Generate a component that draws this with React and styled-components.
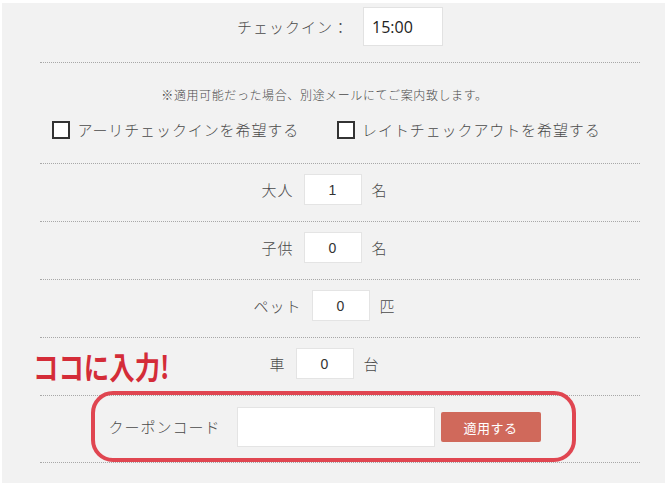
import React from "react";
import styled, { createGlobalStyle } from "styled-components";

const GlobalStyle = createGlobalStyle`
  body {
    margin: 0;
    background: #ffffff;
    font-family: "Noto Sans CJK JP", "Noto Sans", sans-serif;
  }
`;

const Panel = styled.div`
  position: relative;
  margin: 3px 1px 0 2px;
  height: 480px;
  padding: 0 25px 0 38px;
  background: #f2f2f2;
  box-sizing: border-box;
`;

const Section = styled.div`
  display: flex;
  flex-direction: column;
  align-items: center;
  padding: ${(p) => p.$pad || "0"};
  border-bottom: 1px dotted #a8a8a8;
`;

const Row = styled.div`
  display: flex;
  align-items: center;
  justify-content: center;
  gap: ${(p) => p.$gap || 10}px;
  padding: ${(p) => p.$pad || "0"};
  border-bottom: 1px dotted #a8a8a8;
`;

const Label = styled.span`
  font-size: 15px;
  font-weight: 300;
  line-height: 20px;
  letter-spacing: 1px;
  color: #4a4a4a;
`;

const TimeInput = styled.input`
  width: 80px;
  height: 39px;
  box-sizing: border-box;
  border: 1px solid #e2e2e2;
  background: #fff;
  padding: 0 8px;
  font-family: "Open Sans", "Liberation Sans", sans-serif;
  font-size: 16px;
  color: #222;
  outline: none;
`;

const Note = styled.p`
  margin: 0 0 19px;
  padding-right: 31px;
  font-size: 12px;
  font-weight: 300;
  line-height: 15px;
  letter-spacing: 0.6px;
  color: #4a4a4a;
`;

const CheckRow = styled.div`
  display: flex;
  align-items: center;
  gap: 38px;
  padding-right: 27px;
`;

const CheckItem = styled.label`
  display: flex;
  align-items: center;
  gap: 7px;
  font-size: 15px;
  font-weight: 300;
  line-height: 18px;
  letter-spacing: 0.9px;
  color: #4a4a4a;
`;

const Box = styled.span`
  width: 14px;
  height: 14px;
  border: 2px solid #333;
  background: #fff;
`;

const NumInput = styled.input`
  width: 58px;
  height: 31px;
  box-sizing: border-box;
  border: 1px solid #e4e4e4;
  background: #fff;
  text-align: center;
  font-family: "Liberation Sans", sans-serif;
  font-size: 14px;
  color: #333;
  outline: none;
`;

const CodeInput = styled.input`
  width: 198px;
  height: 40px;
  box-sizing: border-box;
  margin-left: 6px;
  border: 1px solid #e4e4e4;
  background: #fff;
  outline: none;
`;

const ApplyButton = styled.button`
  width: 100px;
  height: 30px;
  margin-left: -4px;
  border: none;
  border-radius: 2px;
  background: #d0695b;
  color: #fff;
  font-family: "Noto Sans CJK JP", sans-serif;
  font-size: 13px;
  letter-spacing: 0.5px;
`;

const Callout = styled.div`
  position: absolute;
  left: 31px;
  top: 343px;
  font-size: 31px;
  font-weight: 700;
  line-height: 40px;
  color: #d42c38;
  transform: scaleX(0.82);
  transform-origin: left center;
  white-space: nowrap;
`;

const Frame = styled.div`
  position: absolute;
  left: 89px;
  top: 388px;
  width: 485px;
  height: 71px;
  box-sizing: border-box;
  border: 4px solid #e04651;
  border-radius: 22px;
  pointer-events: none;
`;

const counts = [
  { label: "大人", value: "1", unit: "名" },
  { label: "子供", value: "0", unit: "名" },
  { label: "ペット", value: "0", unit: "匹" },
  { label: "車", value: "0", unit: "台" },
];

const App = () => {
  return (
    <>
      <GlobalStyle />
      <Panel>
        <Row $gap={14} $pad="4px 0 16px">
          <Label>チェックイン：</Label>
          <TimeInput defaultValue="15:00" />
        </Row>
        <Section $pad="24px 0 24px">
          <Note>※適用可能だった場合、別途メールにてご案内致します。</Note>
          <CheckRow>
            <CheckItem>
              <Box />
              アーリチェックインを希望する
            </CheckItem>
            <CheckItem>
              <Box />
              レイトチェックアウトを希望する
            </CheckItem>
          </CheckRow>
        </Section>
        {counts.map((c) => (
          <Row key={c.label} $gap={10} $pad="10px 31px 16px 0">
            <Label>{c.label}</Label>
            <NumInput defaultValue={c.value} />
            <Label>{c.unit}</Label>
          </Row>
        ))}
        <Row $gap={10} $pad="11px 31px 15px 0">
          <Label>クーポンコード</Label>
          <CodeInput />
          <ApplyButton>適用する</ApplyButton>
        </Row>
        <Callout>ココに入力!</Callout>
        <Frame />
      </Panel>
    </>
  );
};

export default App;
